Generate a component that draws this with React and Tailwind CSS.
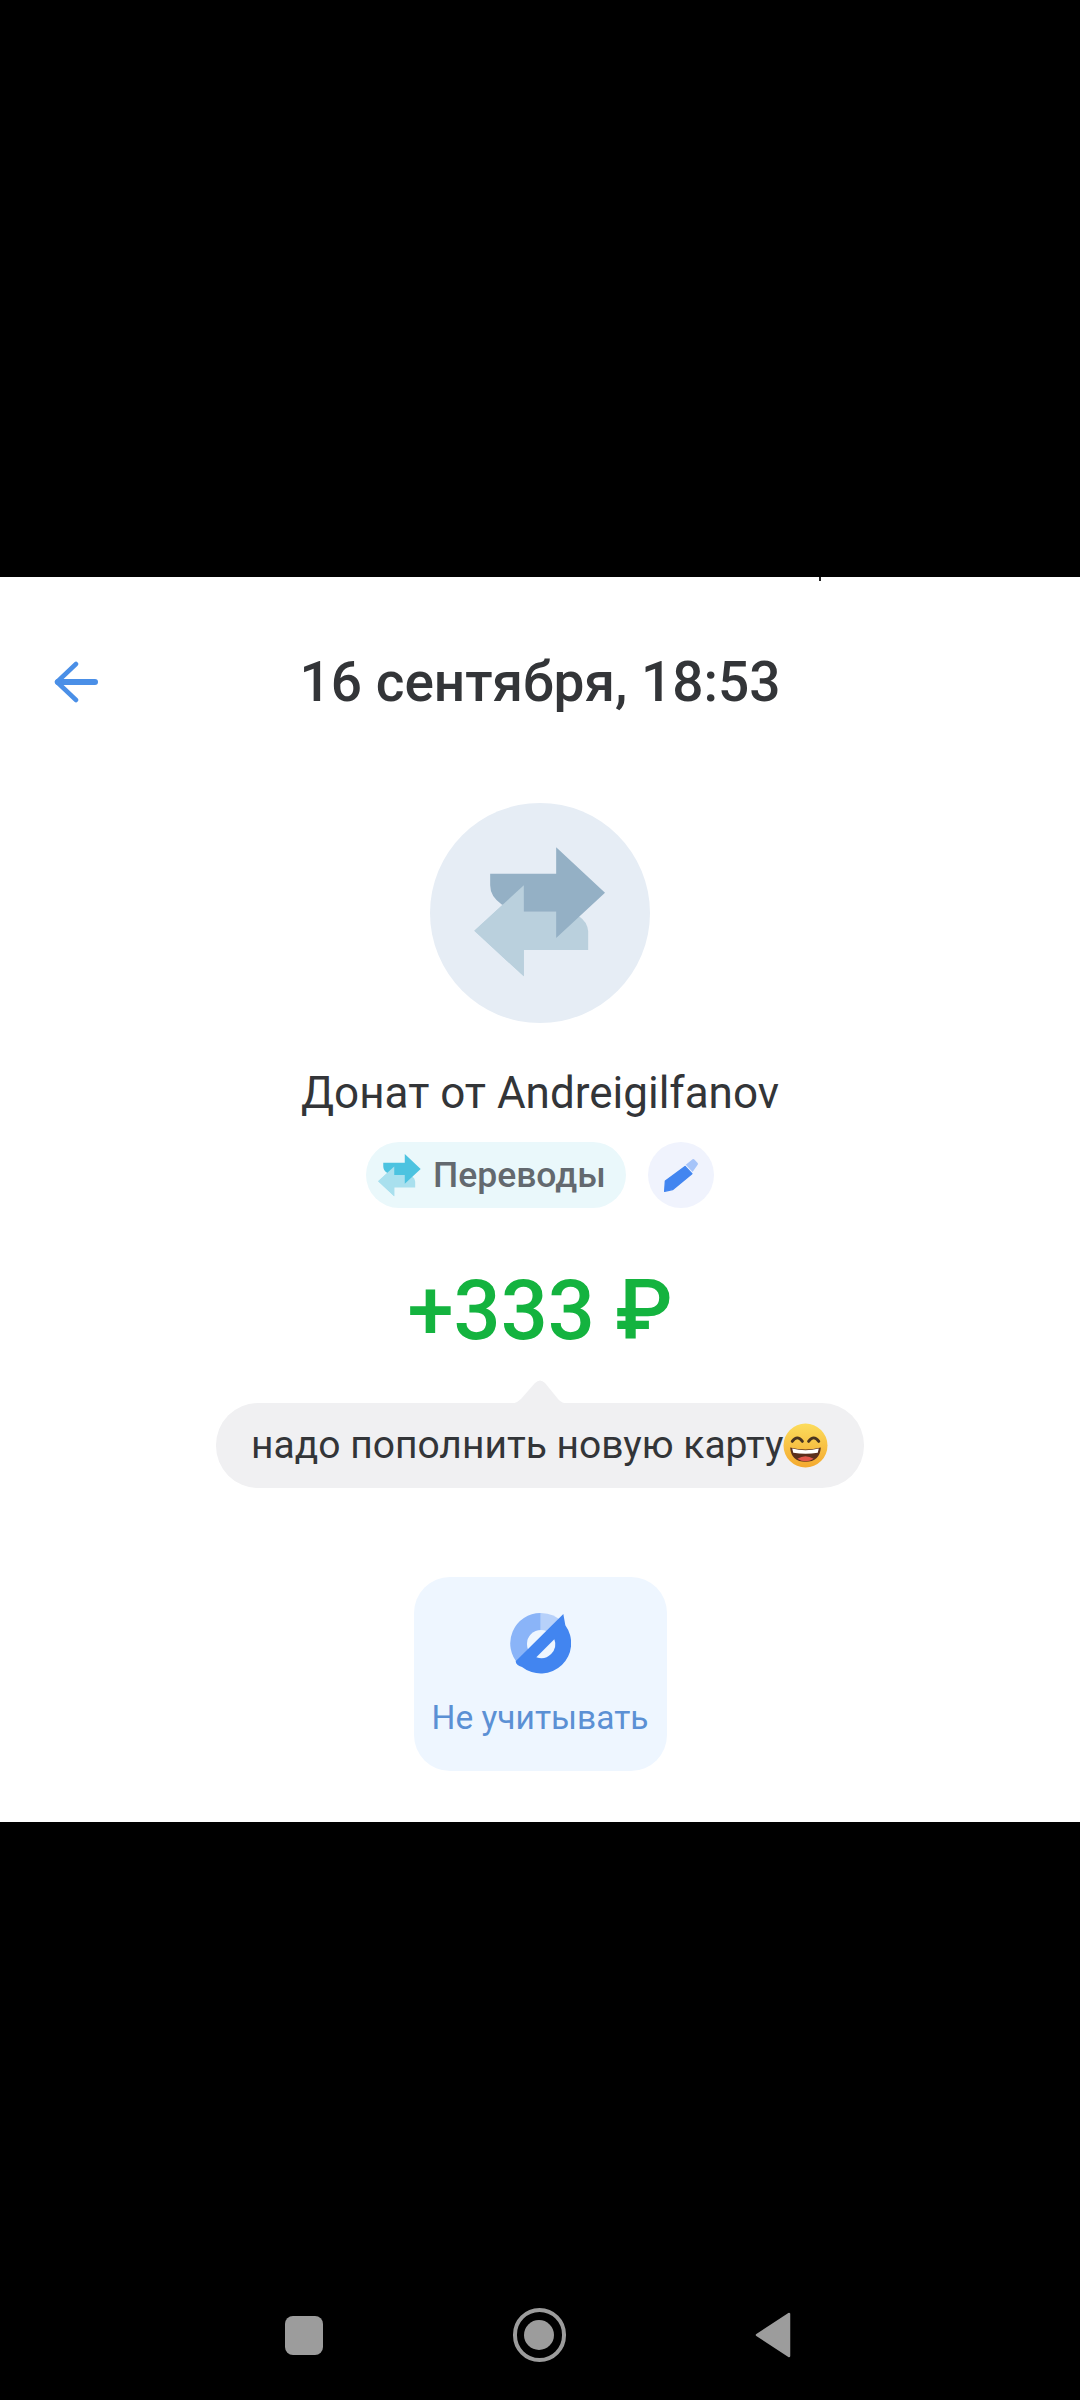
import React from 'react'

const ROBOTO = 'font-[Roboto,"Noto_Sans",sans-serif]'

function BackArrow() {
  return (
    <svg width="44" height="42" viewBox="0 0 44 42" fill="none" stroke="#4a8fe7" strokeLinecap="round" strokeLinejoin="round">
      <path d="M4 21H41" strokeWidth="6" />
      <path d="M22 3L3 21L22 39" strokeWidth="4.500" />
    </svg>
  )
}

// two overlapping arrows, used large in the circle and small in the chip
function TransferArrows({ size, dark, light }) {
  return (
    <svg width={size} height={size} viewBox="0 0 400 400">
      <path d="M151 196H248Q340 196 346 255V312H151V392L1 254L151 116Z" fill={light} />
      <path d="M49 81H249V1L397 139L249 276V196H151L84 174Q49 150 49 116Z" fill={dark} />
      <path d="M151 116V392L1 254Z" fill={light} />
    </svg>
  )
}

function Pencil() {
  return (
    <svg width="34" height="33" viewBox="0 0 100 97">
      <path d="M64 17L84 1Q87 -1 90 2L99 12Q101 15 98 18L84 38Z" fill="#a6c4f9" />
      <path d="M62 22L82 43L25 90L2 95L4 65Z" fill="#4285f0" stroke="#4285f0" strokeWidth="4" strokeLinejoin="round" />
    </svg>
  )
}

function GrinEmoji() {
  return (
    <svg width="45" height="45" viewBox="0 0 44 44">
      <defs>
        <linearGradient id="faceFill" x1="0" y1="0" x2="0" y2="1">
          <stop offset="0" stopColor="#fcdc5c" />
          <stop offset="1" stopColor="#f4a92f" />
        </linearGradient>
      </defs>
      <circle cx="22" cy="22" r="21.500" fill="url(#faceFill)" />
      <path d="M9 18Q14 11 19 18M25 18Q30 11 35 18" fill="none" stroke="#4a3420" strokeWidth="2.800" strokeLinecap="round" />
      <path d="M7 24Q22 28 37 24Q36 38 22 38Q8 38 7 24Z" fill="#5b2f1d" />
      <path d="M9 25Q22 28.500 35 25L34 29Q22 31 10 29Z" fill="#fff" />
      <path d="M14 35Q22 30 30 35Q22 40 14 35Z" fill="#e2584c" />
    </svg>
  )
}

function IgnoreIcon() {
  return (
    <svg width="61" height="61" viewBox="0 0 183 183">
      <path d="M92 91V0A91 91 0 0 1 160 30Z" fill="#b7d1fa" />
      <path d="M92 91V0A91 91 0 0 0 26 154L152 23Z" fill="#8ab4f8" />
      <circle cx="93" cy="93" r="42" fill="#eef6ff" />
      <path d="M160 3L17 145Q18 158 36 162A91 91 0 0 0 166 37Z" fill="#4285f0" />
      <path d="M79 133L133 79A42 42 0 0 1 79 133Z" fill="#eef6ff" />
    </svg>
  )
}

function NavBar() {
  return (
    <div className="flex h-[130px] items-center justify-between pl-[285px] pr-[289px]">
      <div className="h-[39px] w-[38px] rounded-[8px] bg-[#9c9c9c]" />
      <div className="flex h-[54px] w-[53px] items-center justify-center rounded-full border-[4px] border-[#9c9c9c]">
        <div className="h-[30px] w-[30px] rounded-full bg-[#9c9c9c]" />
      </div>
      <svg width="36" height="46" viewBox="0 0 36 46">
        <path d="M34 2V44L2 23Z" fill="#9c9c9c" stroke="#9c9c9c" strokeWidth="2.500" strokeLinejoin="round" />
      </svg>
    </div>
  )
}

export default function App() {
  return (
    <div className={`flex h-[2400px] w-[1080px] flex-col overflow-hidden bg-black ${ROBOTO}`}>
      <div className="h-[577px]" />

      <div className="relative flex h-[1245px] flex-col items-center bg-white">
        {/* tail of a clipped comma from the screen above */}
        <div className="absolute left-[819px] top-0 h-[4px] w-[2px] bg-[#222]" />

        <div className="grid w-full grid-cols-[1fr_auto_1fr] items-center pt-[72px]">
          <div className="pl-[54px]">
            <BackArrow />
          </div>
          <h1 className="text-[55px] leading-[66px] font-medium text-[#333538]">16 сентября, 18:53</h1>
          <div />
        </div>

        <div className="mt-[88px] flex h-[220px] w-[220px] items-center justify-center rounded-full bg-[#e6edf5]">
          <TransferArrows size={132} dark="#94b0c5" light="#bad0dd" />
        </div>

        <p className="mt-[40px] text-[44px] leading-[60px] text-[#333538]">Донат от Andreigilfanov</p>

        <div className="mt-[19px] flex items-center gap-[22px]">
          <div className="flex h-[66px] w-[260px] items-center gap-[12px] rounded-full bg-[#eaf8fb] pl-[12px]">
            <TransferArrows size={43} dark="#4cc3e0" light="#a9e0ee" />
            <span className="text-[35.500px] leading-[66px] font-medium text-[#63696f]">Переводы</span>
          </div>
          <div className="flex h-[66px] w-[66px] items-center justify-center rounded-full bg-[#f0f3fd]">
            <Pencil />
          </div>
        </div>

        <p className="mt-[53px] text-[83px] leading-[100px] font-medium text-[#14b33f]">+333 ₽</p>

        <div className="relative mt-[42px] flex h-[85px] w-[648px] items-center rounded-[42px] bg-[#f0f0f2] pl-[35px]">
          <svg className="absolute left-[296px] top-[-23px]" width="56" height="24" viewBox="0 0 56 24">
            <path d="M0 24Q5 23 9 19L23 3Q28 -2 33 3L46 19Q49 23 56 24Z" fill="#f0f0f2" />
          </svg>
          <span className="text-[39px] leading-[85px] text-[#333538]">надо пополнить новую карту</span>
          <GrinEmoji />
        </div>

        <div className="mt-[89px] flex h-[194px] w-[253px] flex-col items-center rounded-[36px] bg-[#eef6ff] pt-[36px]">
          <IgnoreIcon />
          <span className="mt-[22px] text-[33.500px] leading-[44px] text-[#5b90d4]">Не учитывать</span>
        </div>
      </div>

      <div className="flex-1" />
      <NavBar />
    </div>
  )
}
